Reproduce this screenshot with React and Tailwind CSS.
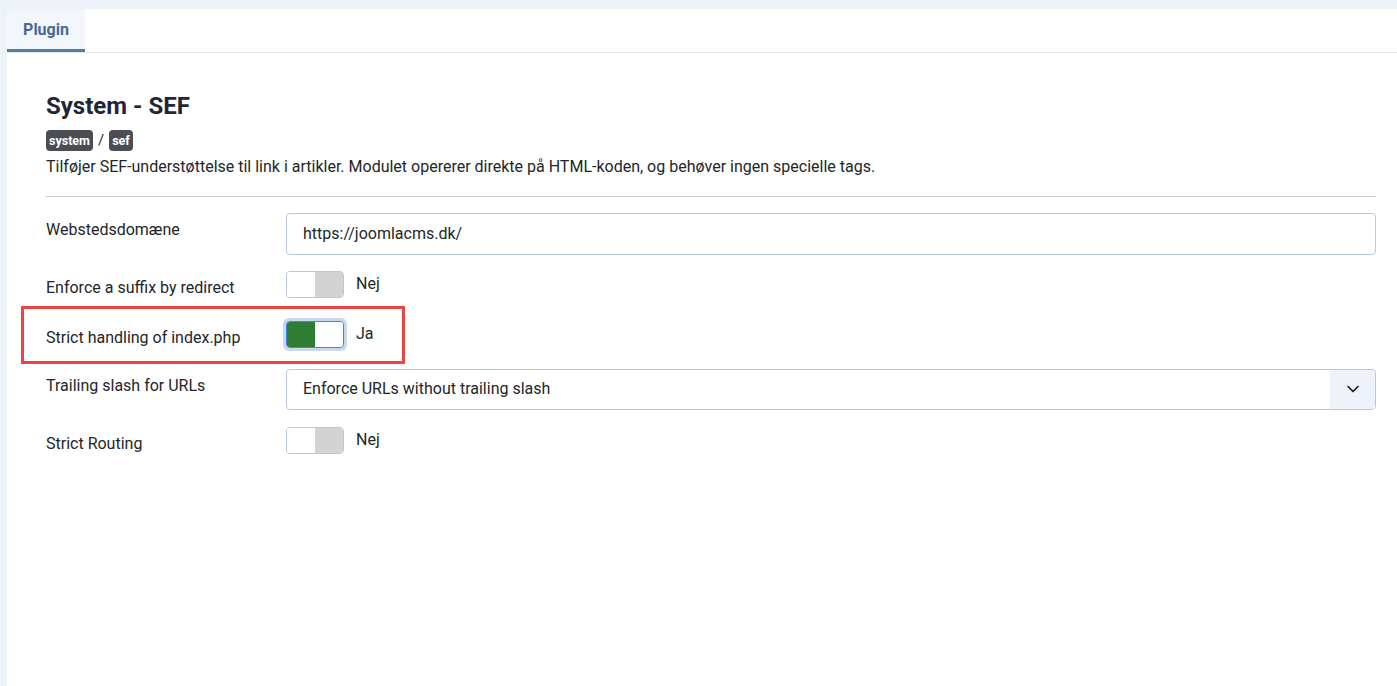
import { ChevronDown } from "lucide-react";

function Toggle({ on, focused }) {
  return (
    <div className={`rounded-[6px] p-[3px] -m-[3px] ${focused ? "bg-[#c9d8ee]" : ""}`}>
      <div className={`flex w-[58px] h-[27px] rounded-[4px] overflow-hidden border ${focused ? "border-[#3f86e8]" : "border-[#b9c8e0]"}`}>
        {on ? (
          <>
            <span className="w-1/2 bg-[#2e7d32]" />
            <span className="w-1/2 bg-white" />
          </>
        ) : (
          <>
            <span className="w-1/2 bg-white" />
            <span className="w-1/2 bg-[#d3d3d3]" />
          </>
        )}
      </div>
    </div>
  );
}

function Row({ label, children, className = "" }) {
  return (
    <div className={`flex items-start ${className}`}>
      <div className="w-[240px] shrink-0 pt-[7px] text-[16px] leading-[20px] text-[#22262a]">{label}</div>
      <div className="flex-1">{children}</div>
    </div>
  );
}

function SwitchField({ on, focused, text }) {
  return (
    <div className="flex items-start gap-[12px]">
      <Toggle on={on} focused={focused} />
      <span className="text-[16px] leading-[20px] text-[#22262a] pt-[3px]">{text}</span>
    </div>
  );
}

export default function App() {
  return (
    <div className="min-h-[686px] bg-[#eef2f9] pt-[9px] pl-[7px]" style={{ fontFamily: "Roboto, 'Liberation Sans', sans-serif" }}>
      <div className="bg-white min-h-[677px]">
        {/* Tabs */}
        <div className="flex border-b border-[#dfe6f1]">
          <div className="w-[78px] h-[43px] pt-[2px] bg-[#f3f6fa] border-b-[3px] border-[#5b7aa3] flex items-center justify-center text-[16px] font-bold text-[#46689a]">
            Plugin
          </div>
        </div>

        <div className="pl-[39px] pr-[21px] pt-[38px]">
          <h2 className="text-[24px] leading-[30px] font-bold text-[#1f2638]">System - SEF</h2>
          <div className="flex items-center gap-[4px] mt-[8px]">
            <span className="bg-[#4a4d53] text-white text-[12.5px] font-bold leading-[21px] px-[3px] rounded-[4px]">system</span>
            <span className="text-[15px] text-[#22262a] px-[1px]">/</span>
            <span className="bg-[#4a4d53] text-white text-[12.5px] font-bold leading-[21px] px-[3px] rounded-[4px]">sef</span>
          </div>
          <p className="text-[16px] leading-[24px] text-[#22262a] mt-[3px]">
            Tilføjer SEF-understøttelse til link i artikler. Modulet opererer direkte på HTML-koden, og behøver ingen specielle tags.
          </p>
          <hr className="border-0 border-t border-[#c8c8c8] mt-[17px]" />

          <div className="mt-[16px]">
            <Row label="Webstedsdomæne">
              <div className="h-[42px] border border-[#b9c8e0] rounded-[4px] flex items-center px-[16px] text-[16px] text-[#22262a]">
                https://joomlacms.dk/
              </div>
            </Row>

            <Row label="Enforce a suffix by redirect" className="mt-[16px]">
              <SwitchField on={false} text="Nej" />
            </Row>

            <div className="relative mt-[23px]">
              <div className="absolute -left-[25px] -top-[15px] w-[384px] h-[58px] border-[3px] border-[#ef4444]" />
              <Row label="Strict handling of index.php">
                <SwitchField on focused text="Ja" />
              </Row>
            </div>

            <Row label="Trailing slash for URLs" className="mt-[21px]">
              <div className="h-[41px] border border-[#b9c8e0] rounded-[4px] flex items-stretch overflow-hidden">
                <div className="flex-1 flex items-center px-[16px] text-[16px] text-[#22262a]">Enforce URLs without trailing slash</div>
                <div className="w-[45px] bg-[#eef3fb] flex items-center justify-center">
                  <ChevronDown size={20} strokeWidth={2} className="text-[#1a1a1a]" />
                </div>
              </div>
            </Row>

            <Row label="Strict Routing" className="mt-[17px]">
              <SwitchField on={false} text="Nej" />
            </Row>
          </div>
        </div>
      </div>
    </div>
  );
}
